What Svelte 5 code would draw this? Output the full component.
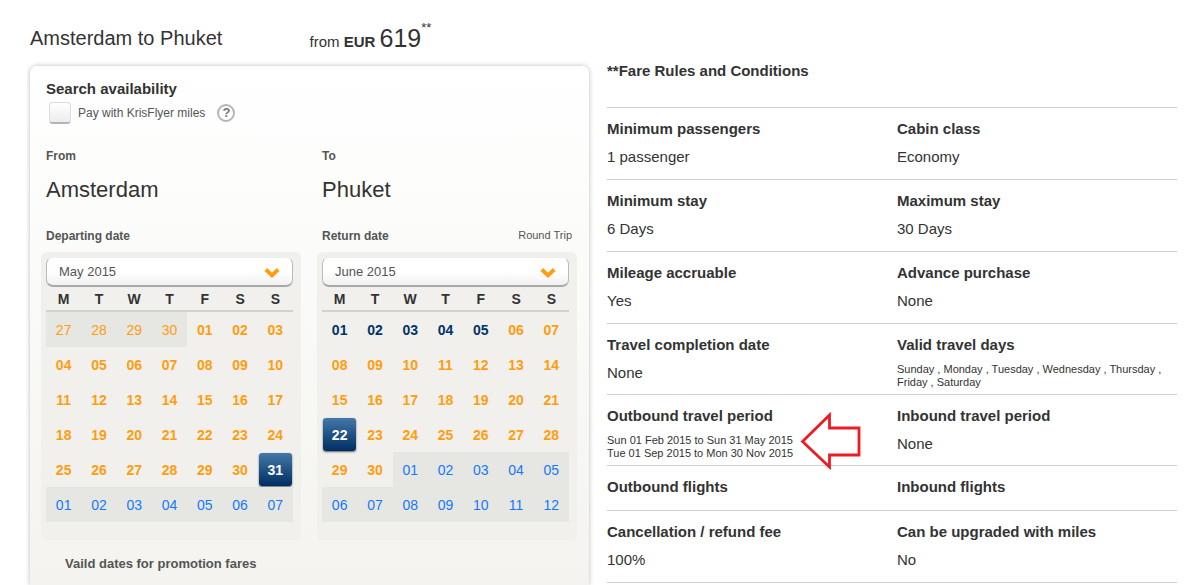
<script>
	const weekdays = ['M', 'T', 'W', 'T', 'F', 'S', 'S'];

	let months = [
		{
			id: 'depart',
			title: 'Departing date',
			options: ['May 2015', 'June 2015', 'July 2015'],
			value: 'May 2015',
			before: [27, 28, 29, 30],
			days: 31,
			after: 7,
			plain: 0,
			selected: 31
		},
		{
			id: 'return',
			title: 'Return date',
			note: 'Round Trip',
			options: ['June 2015', 'July 2015', 'August 2015'],
			value: 'June 2015',
			before: [],
			days: 30,
			after: 12,
			plain: 5,
			selected: 22
		}
	];

	const rules = [
		[
			{ name: 'Minimum passengers', text: '1 passenger' },
			{ name: 'Cabin class', text: 'Economy' }
		],
		[
			{ name: 'Minimum stay', text: '6 Days' },
			{ name: 'Maximum stay', text: '30 Days' }
		],
		[
			{ name: 'Mileage accruable', text: 'Yes' },
			{ name: 'Advance purchase', text: 'None' }
		],
		[
			{ name: 'Travel completion date', text: 'None' },
			{
				name: 'Valid travel days',
				lines: ['Sunday , Monday , Tuesday , Wednesday , Thursday , Friday , Saturday']
			}
		],
		[
			{
				name: 'Outbound travel period',
				lines: ['Sun 01 Feb 2015 to Sun 31 May 2015', 'Tue 01 Sep 2015 to Mon 30 Nov 2015'],
				arrow: true
			},
			{ name: 'Inbound travel period', text: 'None' }
		],
		[{ name: 'Outbound flights' }, { name: 'Inbound flights' }],
		[
			{ name: 'Cancellation / refund fee', text: '100%' },
			{ name: 'Can be upgraded with miles', text: 'No' }
		]
	];

	function pad(n) {
		return String(n).padStart(2, '0');
	}

	// six weeks of seven cells, with the ends of the neighbouring months
	function weeks(month) {
		let cells = month.before.map((d) => ({ day: d, kind: 'previous' }));
		for (let d = 1; d <= month.days; d++) {
			cells.push({ day: d, kind: d <= month.plain ? 'plain' : 'promo' });
		}
		for (let d = 1; d <= month.after; d++) {
			cells.push({ day: d, kind: 'next' });
		}
		let rows = [];
		for (let i = 0; i < cells.length; i += 7) {
			rows.push(cells.slice(i, i + 7));
		}
		return rows;
	}

	function isSelected(month, cell) {
		return (cell.kind === 'promo' || cell.kind === 'plain') && cell.day === month.selected;
	}

	function select(index, cell) {
		if (cell.kind === 'previous' || cell.kind === 'next') return;
		months[index].selected = cell.day;
	}
</script>

<main>
	<section class="booking">
		<header>
			<h1>Amsterdam to Phuket</h1>
			<p class="price">from <b>EUR</b> <span class="amount">619</span><sup>**</sup></p>
		</header>

		<form class="card">
			<h2>Search availability</h2>
			<div class="miles">
				<input type="checkbox" id="miles" />
				<label for="miles">Pay with KrisFlyer miles</label>
				<button type="button" class="help" aria-label="Help">?</button>
			</div>

			<div class="columns cities">
				<div>
					<h3>From</h3>
					<p>Amsterdam</p>
				</div>
				<div>
					<h3>To</h3>
					<p>Phuket</p>
				</div>
			</div>

			<div class="columns">
				{#each months as month, index}
					<div>
						<div class="date-title">
							<label for={month.id}>{month.title}</label>
							{#if month.note}<span>{month.note}</span>{/if}
						</div>
						<div class="calendar">
							<div class="picker">
								<select id={month.id} bind:value={month.value}>
									{#each month.options as option}
										<option>{option}</option>
									{/each}
								</select>
								<svg width="16" height="12" viewBox="0 0 16 12">
									<path d="M1.8 2.5 L8 8.3 L14.2 2.5" fill="none" stroke="#ff9d0f" stroke-width="3.8" />
								</svg>
							</div>
							<table>
								<thead>
									<tr>
										{#each weekdays as weekday}
											<th>{weekday}</th>
										{/each}
									</tr>
								</thead>
								<tbody>
									{#each weeks(month) as week}
										<tr>
											{#each week as cell}
												<td class={cell.kind}>
													<button
														type="button"
														class:selected={isSelected(month, cell)}
														on:click={() => select(index, cell)}>{pad(cell.day)}</button
													>
												</td>
											{/each}
										</tr>
									{/each}
								</tbody>
							</table>
						</div>
					</div>
				{/each}
			</div>

			<p class="legend">Vaild dates for promotion fares</p>
		</form>
	</section>

	<section class="rules">
		<h2>**Fare Rules and Conditions</h2>
		{#each rules as row}
			<dl class:compact={row.some((rule) => rule.lines)}>
				{#each row as rule}
					<div>
						<dt>{rule.name}</dt>
						{#if rule.text}
							<dd>{rule.text}</dd>
						{:else if rule.lines}
							<dd class="small">
								{#each rule.lines as line}
									<span>{line}</span>
								{/each}
								{#if rule.arrow}
									<svg width="62" height="58" viewBox="0 0 62 58">
										<path
											d="M2.5 29.5 L29.5 3 V16 H59 V43 H29.5 V55 Z"
											fill="#fff"
											stroke="#ed1c24"
											stroke-width="2.8"
										/>
									</svg>
								{/if}
							</dd>
						{/if}
					</div>
				{/each}
			</dl>
		{/each}
	</section>
</main>

<style>
	:global(body) {
		margin: 0;
		background: #fff;
	}

	main {
		display: grid;
		grid-template-columns: 559fr 570fr;
		gap: 18px;
		box-sizing: border-box;
		min-height: 100vh;
		padding: 0 23px 0 30px;
		font-family: Arial, 'Liberation Sans', sans-serif;
		font-size: 15px;
		color: #333;
	}

	h1,
	h2,
	h3,
	p,
	dl,
	dd {
		margin: 0;
	}

	h2 {
		font-size: 15px;
		line-height: 18px;
	}

	button,
	select {
		font-family: inherit;
		cursor: pointer;
	}

	.booking {
		display: flex;
		flex-direction: column;
	}

	header {
		display: grid;
		grid-template-columns: 1fr 1fr;
		align-items: end;
		box-sizing: border-box;
		height: 66px;
		padding-bottom: 12px;
	}

	h1 {
		font-size: 20px;
		font-weight: normal;
		line-height: 32px;
	}

	.price {
		line-height: 24px;
	}

	.amount {
		font-size: 25px;
	}

	sup {
		font-size: 13px;
		line-height: 0;
		vertical-align: 15px;
	}

	.card {
		flex: 1;
		padding: 14px 12px 8px 11px;
		border-radius: 7px 7px 0 0;
		background: linear-gradient(#fff, #fafaf8 45%, #f4f3ef);
		box-shadow: 0 0 5px rgba(0, 0, 0, 0.28);
	}

	.card h2 {
		padding-left: 5px;
	}

	.miles {
		display: flex;
		align-items: center;
		height: 30px;
		padding-left: 8px;
		font-size: 12px;
		color: #555;
	}

	.miles input {
		appearance: none;
		width: 22px;
		height: 22px;
		margin: 0 7px 0 0;
		border: 1px solid #ddd;
		border-bottom: 2px solid #b4b4b4;
		border-radius: 4px;
		background: linear-gradient(#fff, #ececec);
	}

	.miles input:checked {
		background: #ff9d0f;
	}

	.help {
		width: 18px;
		height: 18px;
		margin-left: 12px;
		padding: 0;
		border: 2px solid #b5b5b5;
		border-radius: 50%;
		background: #fff;
		font-size: 13px;
		font-weight: bold;
		line-height: 14px;
		color: #777;
	}

	.columns {
		display: grid;
		grid-template-columns: 1fr 1fr;
		gap: 16px;
	}

	.cities {
		padding-top: 20px;
		margin-bottom: 24px;
	}

	.cities div {
		padding-left: 5px;
	}

	h3,
	.date-title {
		font-size: 12px;
		line-height: 16px;
		color: #555;
	}

	.cities p {
		margin-top: 12px;
		font-size: 22px;
		line-height: 28px;
	}

	.date-title {
		display: flex;
		justify-content: space-between;
		padding: 0 5px;
		margin-bottom: 8px;
	}

	.date-title label {
		font-weight: bold;
	}

	.date-title span {
		font-size: 11px;
		line-height: 14px;
	}

	.calendar {
		padding: 5px 8px 18px 5px;
		border-radius: 6px;
		background: #f1f0ed;
	}

	.picker {
		position: relative;
	}

	.picker svg {
		position: absolute;
		top: 10px;
		right: 13px;
		pointer-events: none;
	}

	select {
		display: block;
		appearance: none;
		width: 100%;
		height: 30px;
		padding: 0 12px;
		border: 1px solid #bbb;
		border-top-color: #eee;
		border-bottom: 2px solid #a9a9a9;
		border-radius: 7px;
		background: linear-gradient(#fff 50%, #f1f1f1);
		font-size: 13px;
		color: #555;
	}

	table {
		width: 100%;
		table-layout: fixed;
		border-collapse: separate;
		border-spacing: 0;
	}

	th {
		height: 23px;
		padding: 0;
		border-bottom: 2px solid #d2d2d0;
		font-size: 14px;
	}

	td {
		height: 35px;
		padding: 0;
		text-align: center;
	}

	td button {
		display: block;
		width: 100%;
		height: 35px;
		padding: 0;
		border: 0;
		background: none;
		font-size: 14px;
		font-weight: bold;
		color: #ff9d0f;
	}

	.previous,
	.next {
		background: #e6e7e3;
	}

	.previous button,
	.next button {
		font-weight: normal;
	}

	.next button {
		color: #1477ff;
	}

	.plain button {
		color: #003466;
	}

	td button.selected {
		width: 33px;
		height: 33px;
		margin: 0 auto;
		border-radius: 3px;
		background: linear-gradient(#4478a8, #002d62);
		box-shadow: 0 1px 2px rgba(0, 0, 0, 0.6);
		color: #fff;
	}

	.legend {
		padding: 15px 24px 0;
		font-size: 13px;
		font-weight: bold;
		line-height: 18px;
		color: #555;
	}

	.rules h2 {
		padding: 62px 0 27px;
	}

	dl {
		display: grid;
		grid-template-columns: 290fr 280fr;
		border-top: 1px solid #cfcfcf;
		padding: 11px 0 13px;
	}

	dl.compact {
		padding-bottom: 12px;
	}

	dl:last-child {
		border-bottom: 1px solid #cfcfcf;
	}

	dt {
		font-weight: bold;
		line-height: 20px;
	}

	dd {
		margin-top: 8px;
		line-height: 19px;
	}

	dd.small {
		position: relative;
		width: 265px;
		margin-bottom: -8px;
		font-size: 11px;
		line-height: 13px;
	}

	.small span {
		display: block;
	}

	.small svg {
		position: absolute;
		top: -22px;
		left: 193px;
	}
</style>
